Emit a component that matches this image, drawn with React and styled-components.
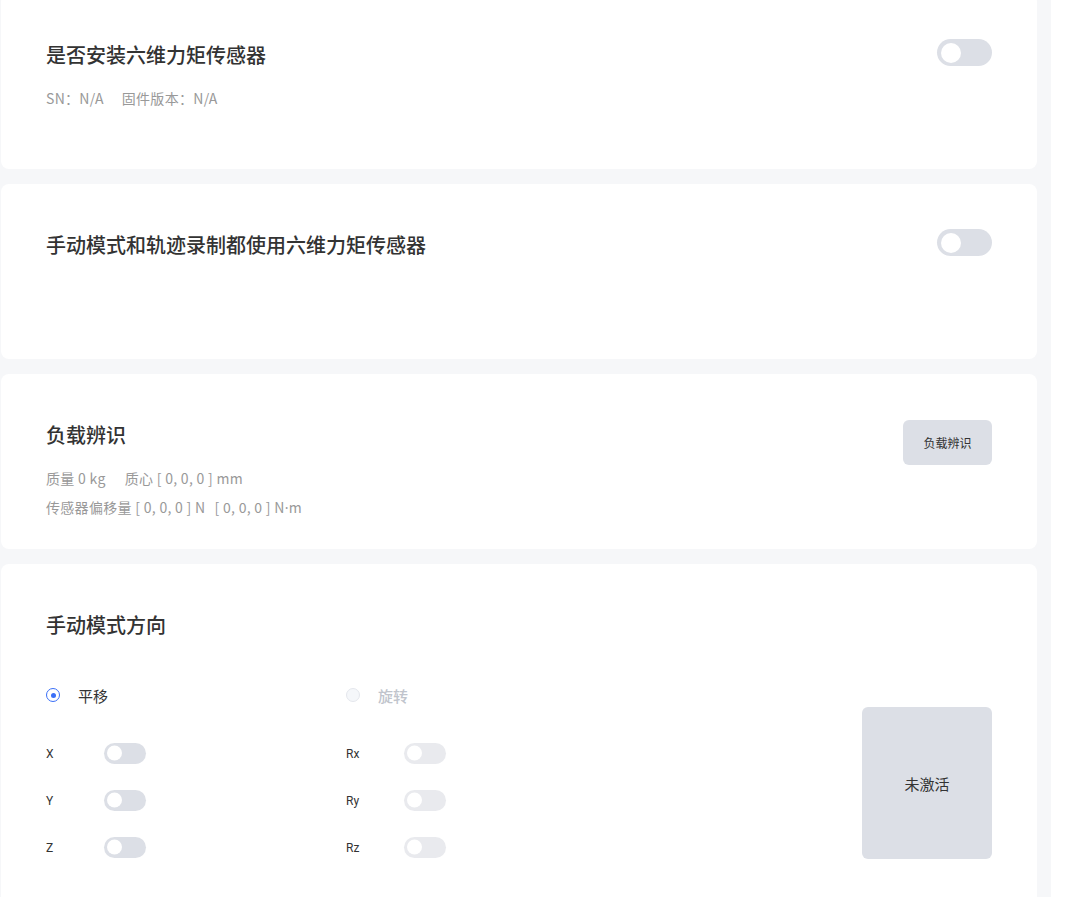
import styled, { createGlobalStyle } from "styled-components"

const GlobalStyle = createGlobalStyle`
body {
  margin: 0;
  background: #ffffff;
  font-family: "Noto Sans CJK SC", "Noto Sans", sans-serif;
  color: #333333;
}
`

const Page = styled.div`
width: 1051px;
min-height: 897px;
box-sizing: border-box;
background: #f6f7f9;
padding: 0 14px 0 1px;
display: flex;
flex-direction: column;
gap: 15px;
margin-top: -6px;
`

const Card = styled.div`
background: #ffffff;
border-radius: 8px;
box-sizing: border-box;
height: ${p => p.$tall ? "auto" : "175px"};
padding: 46px 45px ${p => p.$tall ? "46px" : "0"} 45px;
`

const Header = styled.div`
display: flex;
justify-content: space-between;
align-items: flex-start;
`

const Title = styled.div`
font-size: 20px;
line-height: 30px;
font-weight: 500;
color: #333333;
`

const Meta = styled.div`
display: flex;
font-size: 14px;
line-height: 20px;
font-weight: 400;
letter-spacing: 0.3px;
color: #999999;
margin-top: ${p => p.$first ? "18px" : "9px"};
white-space: pre;
`

const MetaItem = styled.span`
margin-right: ${p => p.$gap || "0"};
`

const Dot = styled.span`
font-family: "Noto Sans", sans-serif;
`

const Switch = styled.div`
position: relative;
flex: none;
margin-top: -1px;
width: ${p => p.$small ? "42px" : "55px"};
height: ${p => p.$small ? "21px" : "27px"};
border-radius: 14px;
background: ${p => p.$disabled ? "#e9eaee" : "#dcdfe6"};
&::after {
  content: "";
  position: absolute;
  left: ${p => p.$small ? "3px" : "4px"};
  top: 50%;
  transform: translateY(-50%);
  width: ${p => p.$small ? "15px" : "20px"};
  height: ${p => p.$small ? "15px" : "20px"};
  border-radius: 50%;
  background: #ffffff;
}
`

const GrayButton = styled.button`
flex: none;
border: none;
background: #dcdfe6;
border-radius: 6px;
font-family: inherit;
color: #333333;
font-size: ${p => p.$big ? "15px" : "12px"};
width: ${p => p.$big ? "130px" : "89px"};
height: ${p => p.$big ? "152px" : "45px"};
margin-top: ${p => p.$big ? "22px" : "0"};
padding: 0;
`

const Body = styled.div`
display: flex;
justify-content: space-between;
align-items: flex-start;
margin-top: 45px;
`

const Columns = styled.div`
display: grid;
grid-template-columns: 300px 300px;
`

const Column = styled.div`
display: flex;
flex-direction: column;
`

const RadioRow = styled.div`
display: flex;
align-items: center;
height: 20px;
gap: 18px;
font-size: 15px;
font-weight: ${p => p.$disabled ? "500" : "400"};
color: ${p => p.$disabled ? "#c0c4cc" : "#333333"};
margin-bottom: 38px;
`

const RadioDot = styled.span`
width: 14px;
height: 14px;
box-sizing: border-box;
border-radius: 50%;
border: 1px solid ${p => p.$checked ? "#3a6ff7" : "#e4e7ed"};
background: ${p => p.$checked ? "#ffffff" : "#f5f7fa"};
display: flex;
align-items: center;
justify-content: center;
&::after {
  content: "";
  width: 5px;
  height: 5px;
  border-radius: 50%;
  background: ${p => p.$checked ? "#3a6ff7" : "transparent"};
}
`

const AxisRow = styled.div`
display: flex;
align-items: center;
height: 21px;
margin-bottom: 26px;
&:last-child {
  margin-bottom: 0;
}
`

const AxisLabel = styled.span`
width: 58px;
font-family: Roboto, "Noto Sans", sans-serif;
font-size: 12px;
color: #333333;
`

const Radio = ({ checked, disabled, label }) => (
    <RadioRow $disabled={disabled}>
        <RadioDot $checked={checked} />
        {label}
    </RadioRow>
)

const Axis = ({ label, disabled }) => (
    <AxisRow>
        <AxisLabel>{label}</AxisLabel>
        <Switch $small $disabled={disabled} />
    </AxisRow>
)

export default function App() {
    return (
        <>
            <GlobalStyle />
            <Page>
                <Card>
                    <Header>
                        <div>
                            <Title>是否安装六维力矩传感器</Title>
                            <Meta $first>
                                <MetaItem $gap="18px">SN：N/A</MetaItem>
                                <MetaItem>固件版本：N/A</MetaItem>
                            </Meta>
                        </div>
                        <Switch />
                    </Header>
                </Card>
                <Card>
                    <Header>
                        <Title>手动模式和轨迹录制都使用六维力矩传感器</Title>
                        <Switch />
                    </Header>
                </Card>
                <Card>
                    <Header>
                        <div>
                            <Title>负载辨识</Title>
                            <Meta $first>
                                <MetaItem $gap="19px">质量 0 kg</MetaItem>
                                <MetaItem>{"质心 [ 0, 0, 0 ] mm"}</MetaItem>
                            </Meta>
                            <Meta>
                                <MetaItem $gap="9px">{"传感器偏移量 [ 0, 0, 0 ] N"}</MetaItem>
                                <MetaItem>{"[ 0, 0, 0 ] N"}<Dot>·</Dot>m</MetaItem>
                            </Meta>
                        </div>
                        <GrayButton>负载辨识</GrayButton>
                    </Header>
                </Card>
                <Card $tall>
                    <Title>手动模式方向</Title>
                    <Body>
                        <Columns>
                            <Column>
                                <Radio checked label="平移" />
                                <Axis label="X" />
                                <Axis label="Y" />
                                <Axis label="Z" />
                            </Column>
                            <Column>
                                <Radio disabled label="旋转" />
                                <Axis label="Rx" disabled />
                                <Axis label="Ry" disabled />
                                <Axis label="Rz" disabled />
                            </Column>
                        </Columns>
                        <GrayButton $big>未激活</GrayButton>
                    </Body>
                </Card>
            </Page>
        </>
    )
}
